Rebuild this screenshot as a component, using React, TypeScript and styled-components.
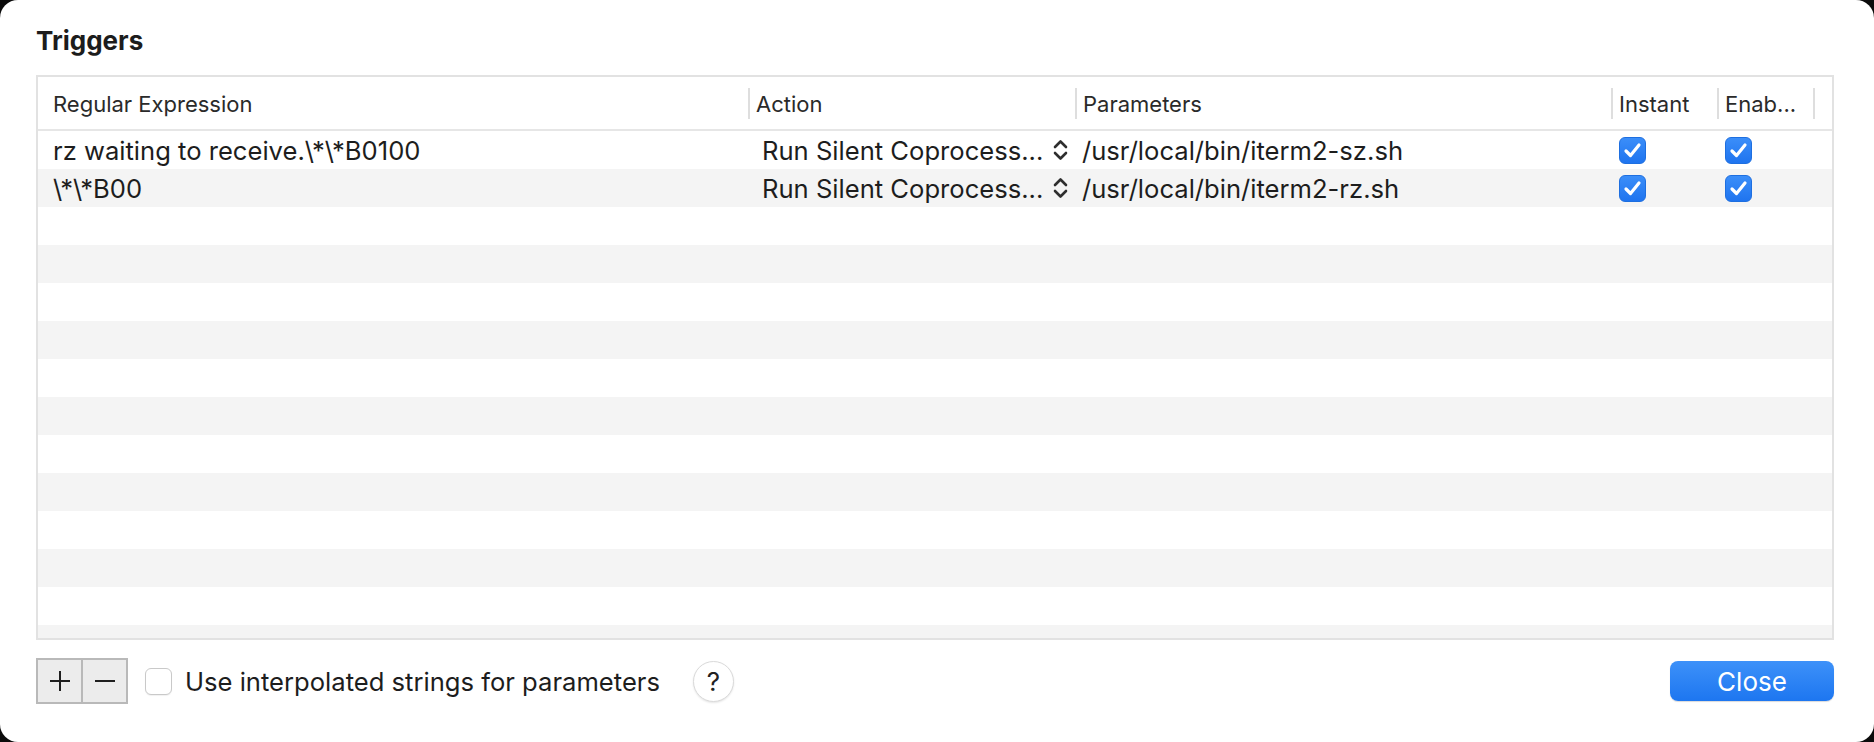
import React from 'react'
import styled, { createGlobalStyle } from 'styled-components'

const GlobalStyle = createGlobalStyle`
  html, body {
    margin: 0;
    padding: 0;
    background: #0b0b0b;
  }
  body {
    font-family: Inter, "Liberation Sans", "DejaVu Sans", sans-serif;
    color: #1d1d1d;
  }
`

type Trigger = {
  regex: string
  action: string
  params: string
  instant: boolean
  enabled: boolean
}

const triggers: Trigger[] = [
  {
    regex: 'rz waiting to receive.\\*\\*B0100',
    action: 'Run Silent Coprocess...',
    params: '/usr/local/bin/iterm2-sz.sh',
    instant: true,
    enabled: true,
  },
  {
    regex: '\\*\\*B00',
    action: 'Run Silent Coprocess...',
    params: '/usr/local/bin/iterm2-rz.sh',
    instant: true,
    enabled: true,
  },
]

const EMPTY_ROWS = 12

const Chevrons = () => (
  <svg width="17" height="22" viewBox="0 0 17 22" fill="none">
    <path d="M3 8 L8.5 2.5 L14 8" stroke="#2e2e2e" strokeWidth="2.6" strokeLinecap="round" strokeLinejoin="round" />
    <path d="M3 14 L8.5 19.5 L14 14" stroke="#2e2e2e" strokeWidth="2.6" strokeLinecap="round" strokeLinejoin="round" />
  </svg>
)

const Check = () => (
  <svg width="19" height="17" viewBox="0 0 19 17" fill="none">
    <path d="M3 9 L7.5 13.5 L16 3" stroke="#fff" strokeWidth="3.2" strokeLinecap="round" strokeLinejoin="round" />
  </svg>
)

const PlusIcon = () => (
  <svg width="24" height="24" viewBox="0 0 24 24">
    <path d="M12 2 V22 M2 12 H22" stroke="#1f1f1f" strokeWidth="2" />
  </svg>
)

const MinusIcon = () => (
  <svg width="24" height="24" viewBox="0 0 24 24">
    <path d="M2 12 H22" stroke="#1f1f1f" strokeWidth="2" />
  </svg>
)

const Checkbox = ({ checked }: { checked: boolean }) => (
  <Box $checked={checked}>{checked && <Check />}</Box>
)

const App = () => {
  return (
    <>
      <GlobalStyle />
      <Window>
        <Title>Triggers</Title>
        <Table>
          <Header>
            <HeadCell $first>Regular Expression</HeadCell>
            <HeadCell>Action</HeadCell>
            <HeadCell>Parameters</HeadCell>
            <HeadCell>Instant</HeadCell>
            <HeadCell>Enab...</HeadCell>
            <HeadCell $last />
          </Header>
          <Body>
            {triggers.map((t, i) => (
              <Row key={i}>
                <Cell $pad={15}>{t.regex}</Cell>
                <Cell $pad={12}>
                  <Popup>
                    <span>{t.action}</span>
                    <Chevrons />
                  </Popup>
                </Cell>
                <Cell $pad={5}>{t.params}</Cell>
                <Cell $pad={6}>
                  <Checkbox checked={t.instant} />
                </Cell>
                <Cell $pad={6}>
                  <Checkbox checked={t.enabled} />
                </Cell>
                <Cell $pad={0} />
              </Row>
            ))}
            {Array.from({ length: EMPTY_ROWS }).map((_, i) => (
              <Row key={'e' + i} />
            ))}
          </Body>
        </Table>
        <Footer>
          <Segmented>
            <SegButton>
              <PlusIcon />
            </SegButton>
            <SegButton>
              <MinusIcon />
            </SegButton>
          </Segmented>
          <Checkbox checked={false} />
          <FooterLabel>Use interpolated strings for parameters</FooterLabel>
          <HelpButton>?</HelpButton>
          <Spacer />
          <CloseButton>Close</CloseButton>
        </Footer>
      </Window>
    </>
  )
}

export default App

const COLUMNS = '712px 327px 536px 106px 96px 1fr'

const Window = styled.div`
  width: 1874px;
  height: 742px;
  background: #ffffff;
  border-radius: 18px;
  box-sizing: border-box;
  padding: 25px 40px 0 36px;
  display: flex;
  flex-direction: column;
  overflow: hidden;
`

const Title = styled.h1`
  margin: 0 0 18px;
  font-size: 26px;
  line-height: 32px;
  font-weight: 700;
  color: #1c1c1c;
`

const Table = styled.div`
  width: 1798px;
  height: 565px;
  box-sizing: border-box;
  border: 2px solid #e2e2e2;
  display: flex;
  flex-direction: column;
  overflow: hidden;
`

const Header = styled.div`
  display: grid;
  grid-template-columns: ${COLUMNS};
  height: 54px;
  flex-shrink: 0;
  box-sizing: border-box;
  border-bottom: 2px solid #e6e6e6;
  align-items: center;
`

const HeadCell = styled.div<{ $first?: boolean; $last?: boolean }>`
  height: 31px;
  display: flex;
  align-items: center;
  box-sizing: border-box;
  padding-left: ${(p) => (p.$first ? 15 : 6)}px;
  padding-top: 2px;
  border-right: ${(p) => (p.$last ? 'none' : '2px solid #dedede')};
  font-size: 22px;
  color: #2a2a2a;
  white-space: nowrap;
`

const Body = styled.div`
  flex: 1;
  overflow: hidden;
`

const Row = styled.div`
  display: grid;
  grid-template-columns: ${COLUMNS};
  height: 38px;
  background: #ffffff;

  &:nth-child(even) {
    background: #f4f4f4;
  }
`

const Cell = styled.div<{ $pad: number }>`
  display: flex;
  align-items: center;
  padding-left: ${(p) => p.$pad}px;
  font-size: 25.6px;
  color: #1d1d1d;
  white-space: nowrap;
  overflow: hidden;
`

const Popup = styled.div`
  flex: 1;
  display: flex;
  align-items: center;
  justify-content: space-between;
  padding-right: 8px;
`

const Box = styled.div<{ $checked: boolean }>`
  width: 27px;
  height: 27px;
  box-sizing: border-box;
  border-radius: 6px;
  flex-shrink: 0;
  display: flex;
  align-items: center;
  justify-content: center;
  background: ${(p) =>
    p.$checked ? 'linear-gradient(#3b8ef9, #1f74ef)' : '#ffffff'};
  border: ${(p) => (p.$checked ? '1px solid #1e6fe0' : '1.5px solid #c9c9c9')};
  box-shadow: ${(p) => (p.$checked ? 'none' : '0 1px 1px rgba(0,0,0,0.06)')};
`

const Footer = styled.div`
  margin-top: 18px;
  width: 1798px;
  height: 46px;
  display: flex;
  align-items: center;
`

const Segmented = styled.div`
  width: 92px;
  height: 46px;
  box-sizing: border-box;
  border: 2px solid #b9b9b9;
  background: #ececec;
  display: flex;
  margin-right: 17px;
`

const SegButton = styled.div`
  flex: 1;
  display: flex;
  align-items: center;
  justify-content: center;

  &:first-child {
    border-right: 2px solid #b9b9b9;
  }
`

const FooterLabel = styled.span`
  margin-left: 13px;
  font-size: 25.6px;
  color: #1d1d1d;
  white-space: nowrap;
`

const HelpButton = styled.div`
  margin-left: 33px;
  width: 41px;
  height: 41px;
  box-sizing: border-box;
  border-radius: 50%;
  border: 1px solid #dadada;
  box-shadow: 0 1px 2px rgba(0, 0, 0, 0.1);
  background: #ffffff;
  display: flex;
  align-items: center;
  justify-content: center;
  font-size: 26px;
  color: #222;
`

const Spacer = styled.div`
  flex: 1;
`

const CloseButton = styled.div`
  width: 164px;
  height: 40px;
  border-radius: 8px;
  background: linear-gradient(#3d91f9, #1d76f0);
  box-shadow: 0 1px 1px rgba(0, 0, 0, 0.15);
  color: #ffffff;
  font-size: 26px;
  display: flex;
  align-items: center;
  justify-content: center;
`
